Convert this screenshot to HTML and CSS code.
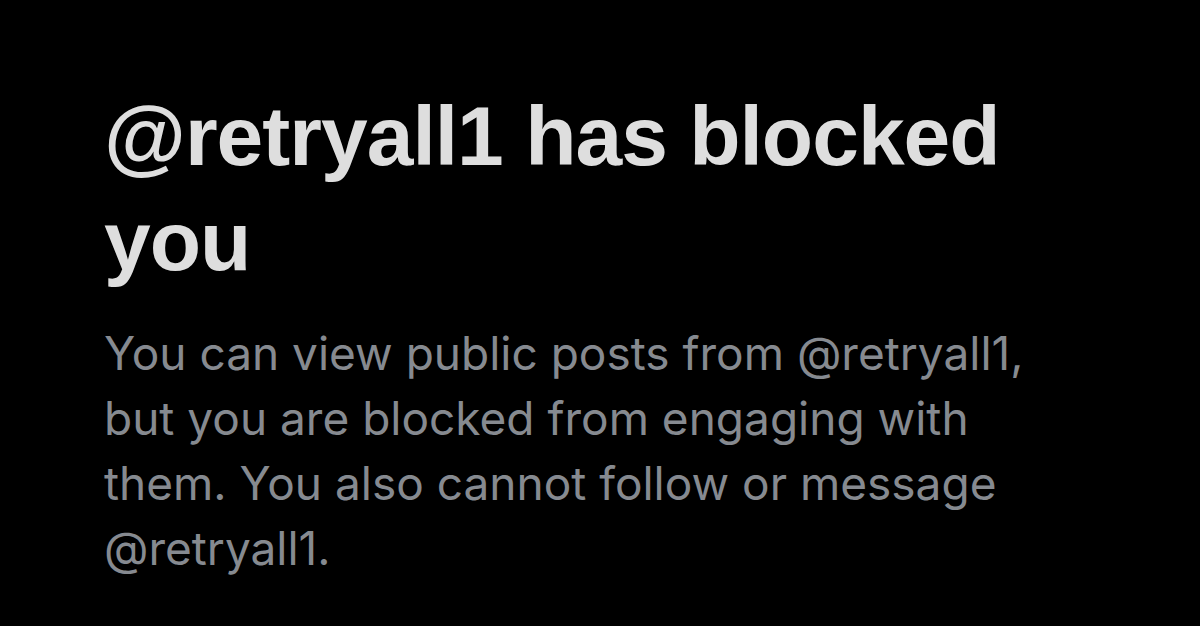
FILE: index.html
```html
<!DOCTYPE html>
<html>
<head>
<meta charset="utf-8" />
<title>Blocked</title>
<link rel="stylesheet" href="styles.css">
</head>
<body>
<div class="blocked">
  <h1 class="blocked-title">@retryall1 has blocked you</h1>
  <p class="blocked-desc">You can view public posts from @retryall1, but you are blocked from engaging with them. You also cannot follow or message @retryall1.</p>
</div>
</body>
</html>
```
FILE: styles.css
```css
html, body {margin: 0; padding: 0; background: #000; height: 100%;}
body {font-family: "Liberation Sans", Arial, sans-serif; overflow: hidden;}

.blocked {padding: 84px 0 0 104px; width: 940px;}
.blocked-title {margin: 0; font-size: 84px; line-height: 105px; font-weight: bold; color: #dedede; letter-spacing: -1px;}
.blocked-desc {margin: 27px 0 0; font-family: Inter, "Noto Sans", sans-serif; font-size: 46px; line-height: 65px; color: #868a90;}
```
